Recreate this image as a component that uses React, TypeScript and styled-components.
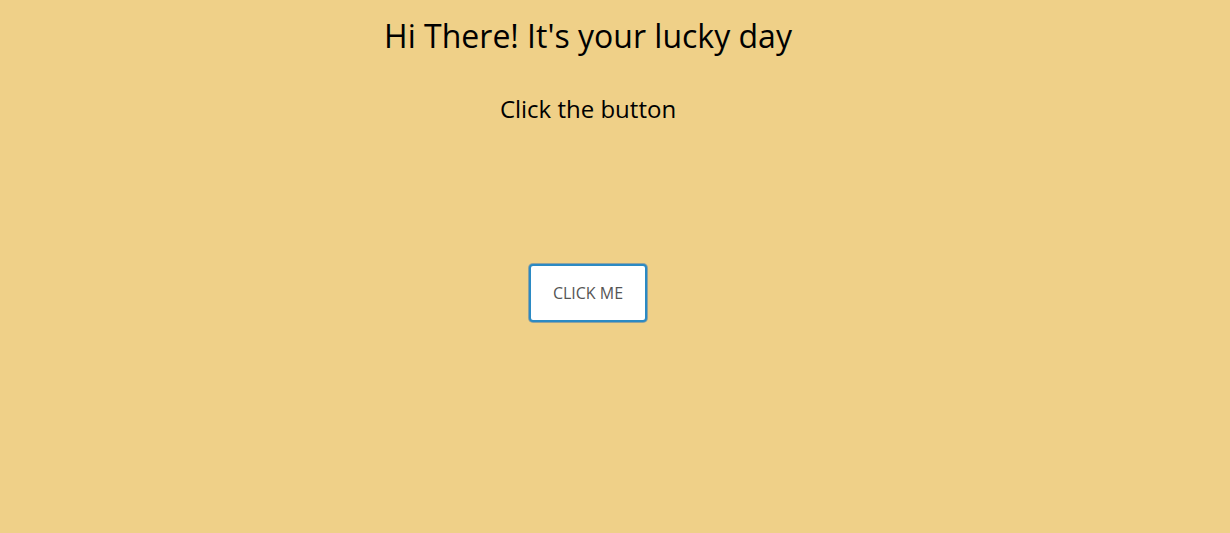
import React from "react";
import styled, { createGlobalStyle } from "styled-components";

const Global = createGlobalStyle`
  html, body { margin: 0; padding: 0; background: #efd088; }
  body { font-family: "Open Sans", "Liberation Sans", sans-serif; }
`;

const Page = styled.div`
  width: 1176px;
  height: 533px;
  display: flex;
  flex-direction: column;
  align-items: center;
  text-align: center;
  color: #000;
`;

const Title = styled.h1`
  margin: 14px 0 0;
  font-size: 32px;
  font-weight: 400;
  line-height: 44px;
`;

const Subtitle = styled.h2`
  margin: 35px 0 0;
  font-size: 24px;
  font-weight: 400;
  line-height: 32px;
`;

const Button = styled.button`
  margin-top: 139px;
  width: 118px;
  height: 58px;
  background: #fff;
  border: 2px solid #2b8ac4;
  border-radius: 4px;
  box-shadow: 0 0 0 1px #8fa2a0;
  font-family: "Open Sans", "Liberation Sans", sans-serif;
  font-size: 16px;
  color: #555;
  text-transform: uppercase;
  cursor: pointer;
`;

export default function App() {
  return (
    <>
      <Global />
      <Page>
        <Title>Hi There! It's your lucky day</Title>
        <Subtitle>Click the button</Subtitle>
        <Button>Click me</Button>
      </Page>
    </>
  );
}
